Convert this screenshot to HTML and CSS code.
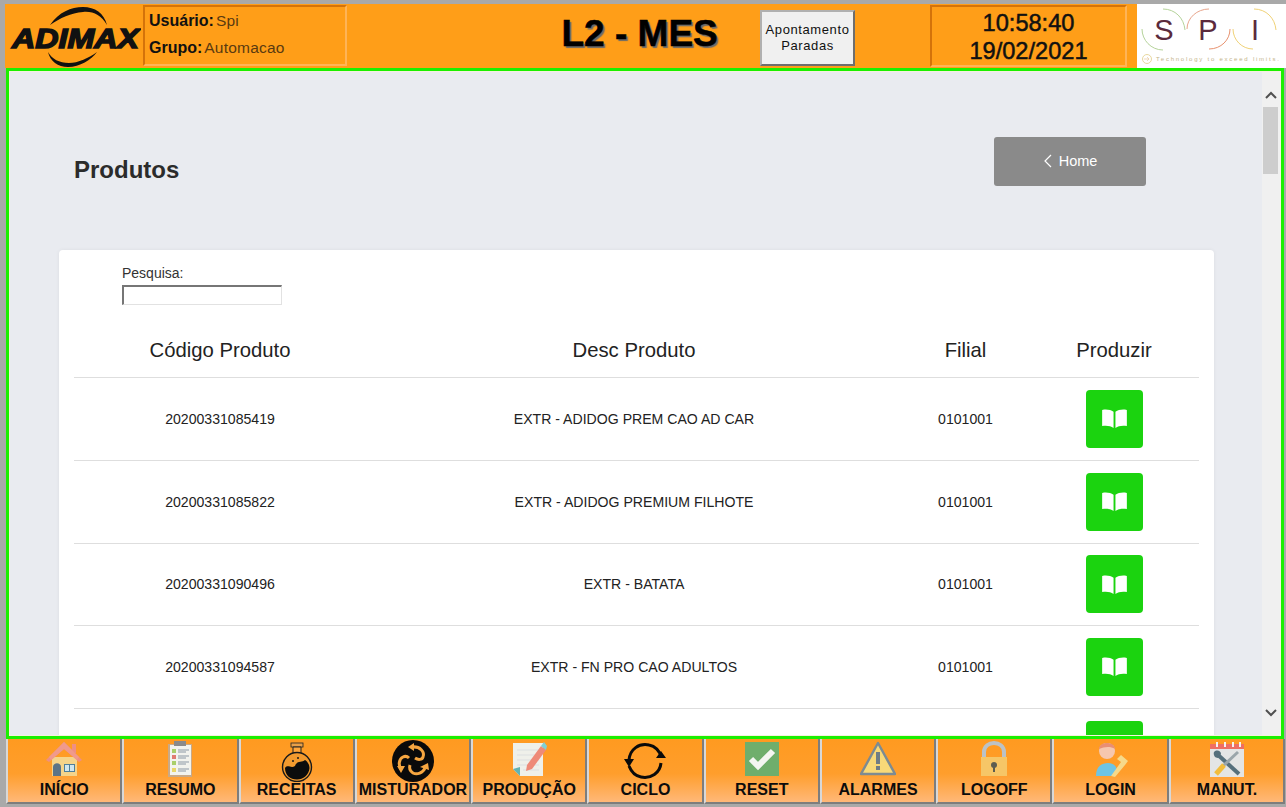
FILE: index.html
```html
<!DOCTYPE html>
<html lang="en">

<head>
  <meta charset="UTF-8">
  <meta name="viewport" content="width=device-width, initial-scale=1.0">
  <title>L2 - MES</title>
  <link rel="stylesheet" href="styles.css">
</head>

<body>
  <header class="topbar">
    <div class="logo">
      <svg width="136" height="66" viewBox="0 0 136 66">
        <path d="M45 21 C54 8 66 3 78 3 C90 3 99 9 102 21 C96 11 88 7 78 8 C66 9 55 14 45 21Z" fill="#111" />
        <path d="M43 48 C45 57 53 63 63 63 C75 63 86 56 92 48 C84 54 73 59 64 59 C54 59 47 55 43 48Z" fill="#111" />
        <text class="logo-text" x="7" y="44" textLength="127" lengthAdjust="spacingAndGlyphs">ADIMAX</text>
      </svg>
    </div>
    <div class="user-box">
      <div class="user-line"><b>Usuário:</b><span>Spi</span></div>
      <div class="user-line"><b>Grupo:</b><span>Automacao</span></div>
    </div>
    <h1 class="app-title">L2 - MES</h1>
    <button class="stop-btn">Apontamento<br>Paradas</button>
    <div class="clock">
      <div>10:58:40</div>
      <div>19/02/2021</div>
    </div>
    <div class="spi-logo">
      <svg width="149" height="64" viewBox="0 0 149 64">
        <g fill="none" stroke-width="1">
          <path d="M5 25 C5 36 14 46 26 46" stroke="#b5d39a" />
          <path d="M26 5 C38 5 47 14 48 26" stroke="#b5d39a" />
          <path d="M50 25 C50 14 60 5 72 5" stroke="#e8a58c" />
          <path d="M72 45 C84 45 93 36 93 25" stroke="#e8926f" />
          <path d="M96 25 C96 36 105 45 116 45" stroke="#f0d277" />
          <path d="M117 5 C129 5 138 14 139 26" stroke="#f0d277" />
        </g>
        <g class="spi-letters">
          <text x="27" y="36" text-anchor="middle">S</text>
          <text x="71" y="36" text-anchor="middle">P</text>
          <text x="118" y="36" text-anchor="middle">I</text>
        </g>
        <circle cx="10" cy="55" r="4.5" fill="none" stroke="#e8d8a0" />
        <path d="M7 55 H12 M10 53 L12 55 L10 57" fill="none" stroke="#e8c9a0" stroke-width=".7" />
        <text class="spi-tag" x="19" y="57">Technology to exceed limits.</text>
      </svg>
    </div>
  </header>

  <main class="frame">
    <div class="content">
      <div class="page-head">
        <h2>Produtos</h2>
        <a class="home-btn" href="#">
          <svg width="9" height="14" viewBox="0 0 9 14">
            <path d="M8 1 L2 7 L8 13" fill="none" stroke="#fff" stroke-width="1.2" />
          </svg>
          Home
        </a>
      </div>

      <section class="card">
        <div class="search">
          <label for="q">Pesquisa:</label>
          <input id="q" type="text">
        </div>

        <table>
          <thead>
            <tr>
              <th class="col-code">Código Produto</th>
              <th class="col-desc">Desc Produto</th>
              <th class="col-branch">Filial</th>
              <th class="col-action">Produzir</th>
            </tr>
          </thead>
          <tbody>
            <tr>
              <td>20200331085419</td>
              <td>EXTR - ADIDOG PREM CAO AD CAR</td>
              <td>0101001</td>
              <td><button class="go-btn"><svg class="book" viewBox="0 0 26 20"><path d="M0 1 C5 0 9 1 12 3 V20 C9 18 5 17 0 18Z M26 1 C21 0 17 1 14 3 V20 C17 18 21 17 26 18Z" fill="#fff" /></svg></button></td>
            </tr>
            <tr>
              <td>20200331085822</td>
              <td>EXTR - ADIDOG PREMIUM FILHOTE</td>
              <td>0101001</td>
              <td><button class="go-btn"><svg class="book" viewBox="0 0 26 20"><path d="M0 1 C5 0 9 1 12 3 V20 C9 18 5 17 0 18Z M26 1 C21 0 17 1 14 3 V20 C17 18 21 17 26 18Z" fill="#fff" /></svg></button></td>
            </tr>
            <tr>
              <td>20200331090496</td>
              <td>EXTR - BATATA</td>
              <td>0101001</td>
              <td><button class="go-btn"><svg class="book" viewBox="0 0 26 20"><path d="M0 1 C5 0 9 1 12 3 V20 C9 18 5 17 0 18Z M26 1 C21 0 17 1 14 3 V20 C17 18 21 17 26 18Z" fill="#fff" /></svg></button></td>
            </tr>
            <tr>
              <td>20200331094587</td>
              <td>EXTR - FN PRO CAO ADULTOS</td>
              <td>0101001</td>
              <td><button class="go-btn"><svg class="book" viewBox="0 0 26 20"><path d="M0 1 C5 0 9 1 12 3 V20 C9 18 5 17 0 18Z M26 1 C21 0 17 1 14 3 V20 C17 18 21 17 26 18Z" fill="#fff" /></svg></button></td>
            </tr>
            <tr>
              <td></td>
              <td></td>
              <td></td>
              <td><button class="go-btn"><svg class="book" viewBox="0 0 26 20"><path d="M0 1 C5 0 9 1 12 3 V20 C9 18 5 17 0 18Z M26 1 C21 0 17 1 14 3 V20 C17 18 21 17 26 18Z" fill="#fff" /></svg></button></td>
            </tr>
          </tbody>
        </table>
      </section>
    </div>

    <div class="scrollbar">
      <svg width="12" height="8" viewBox="0 0 12 8"><path d="M1 7 L6 2 L11 7" fill="none" stroke="#505050" stroke-width="2" /></svg>
      <div class="thumb"></div>
      <svg class="scroll-down" width="12" height="8" viewBox="0 0 12 8"><path d="M1 1 L6 6 L11 1" fill="none" stroke="#505050" stroke-width="2" /></svg>
    </div>
  </main>

  <nav class="bottombar">
    <a class="nav-btn" href="#">
      <svg viewBox="0 0 36 36">
        <rect x="6" y="16" width="25" height="19" fill="#f5d48a" />
        <rect x="26" y="3" width="4" height="9" fill="#ee8f84" />
        <path d="M0 19 L18 1 L36 19 L33 21 L18 8 L3 21Z" fill="#ee8f84" />
        <path d="M18 1 L33 16 L31 19 L18 8 L5 19 L3 16Z" fill="#f09a8c" />
        <path d="M7 35 V26 C7 21 15 21 15 26 V35Z" fill="#5c7486" />
        <rect x="18" y="23" width="11" height="8" fill="#4f7f9b" />
        <rect x="19" y="24" width="4" height="6" fill="#cfe6ee" />
        <rect x="24" y="24" width="4" height="6" fill="#cfe6ee" />
      </svg>
      <span>INÍCIO</span>
    </a>
    <a class="nav-btn" href="#">
      <svg viewBox="0 0 36 36">
        <rect x="6" y="3" width="24" height="33" fill="#c9a987" />
        <rect x="8" y="4" width="21" height="30" fill="#f2f3ee" />
        <rect x="12" y="0" width="12" height="5" fill="#8a8a8a" />
        <rect x="10" y="8" width="4" height="4" fill="#a9cf6b" />
        <rect x="10" y="14" width="4" height="4" fill="#e07a72" />
        <rect x="10" y="20" width="4" height="4" fill="#a9cf6b" />
        <rect x="10" y="27" width="4" height="4" fill="#e9d66b" />
        <path d="M16 9 H27 M16 11 H24 M16 15 H27 M16 17 H24 M16 21 H27 M16 23 H24 M16 28 H27 M16 30 H24" stroke="#8b99a6" stroke-width="1.1" />
      </svg>
      <span>RESUMO</span>
    </a>
    <a class="nav-btn" href="#">
      <svg class="big-icon" viewBox="0 0 42 42">
        <rect x="15" y="3" width="12" height="4" fill="#e8a04a" stroke="#222" stroke-width=".8" />
        <path d="M17 7 H25 V14 H17Z" fill="#ffa63c" stroke="#222" stroke-width="1" />
        <circle cx="21" cy="27" r="14.5" fill="#f29a2e" stroke="#1a1a1a" stroke-width="1.4" />
        <path d="M9 28 C12 24 15 29 19 26 C21 20 26 23 29 20 C32 22 33.5 25 33.5 28 C33 35 27 39.5 21 39.5 C14 39.5 9 35 9 28Z" fill="#0c0c0c" />
        <circle cx="17" cy="21" r="1" fill="#1a1a1a" />
        <circle cx="22" cy="18" r="1" fill="#1a1a1a" />
      </svg>
      <span>RECEITAS</span>
    </a>
    <a class="nav-btn" href="#">
      <svg class="big-icon" viewBox="0 0 42 42">
        <circle cx="21" cy="21" r="21" fill="#0a0a0a" />
        <g fill="none" stroke="#f6a640" stroke-width="3">
          <path d="M20 7 C28 6 33 12 31 17 C30 20 26 20 23 18" />
          <path d="M33 28 C31 33 25 35 21 33 C18 31 17 28 18 25" />
          <path d="M9 29 C6 25 7 19 11 17 C13 16 15 16 17 18" />
        </g>
        <path d="M22 3 V11 L16 7Z M28 27 L37 30 L36 23Z M5 26 H13 L9 33Z" fill="#f6a640" />
      </svg>
      <span>MISTURADOR</span>
    </a>
    <a class="nav-btn" href="#">
      <svg viewBox="0 0 36 36">
        <path d="M2 2 H32 V35 H9 L2 28Z" fill="#eff0ea" />
        <path d="M6 9 H28 M6 14 H28 M6 19 H28 M6 24 H28 M12 29 H28" stroke="#dcdfe0" stroke-width="1" />
        <path d="M2 28 L9 26 V35Z" fill="#62b3b3" />
        <path d="M16 24 L30 5 L35 9 L21 28 L15 30Z" fill="#ee8a78" />
        <path d="M30 5 L33 1 L36 5 L35 9Z" fill="#7fcfd6" />
      </svg>
      <span>PRODUÇÃO</span>
    </a>
    <a class="nav-btn" href="#">
      <svg class="big-icon" viewBox="0 0 42 42">
        <g fill="none" stroke="#0a0a0a" stroke-width="3">
          <path d="M5 20 C6 9 15 3 25 5 C31 6 36 11 37 17" />
          <path d="M37 23 C36 33 27 39 17 37 C11 36 7 31 5 26" />
        </g>
        <path d="M0 19 H10 L5 27Z M32 18 H42 L37 11Z" fill="#0a0a0a" />
      </svg>
      <span>CICLO</span>
    </a>
    <a class="nav-btn" href="#">
      <svg viewBox="0 0 36 36">
        <rect x="1" y="1" width="34" height="34" fill="#6fae6c" />
        <path d="M7 18 L14 25 L29 10" fill="none" stroke="#f4f6f2" stroke-width="6" />
      </svg>
      <span>RESET</span>
    </a>
    <a class="nav-btn" href="#">
      <svg viewBox="0 0 36 36">
        <path d="M18 2 L35 33 H1Z" fill="#f8d978" stroke="#7d8b92" stroke-width="2.4" stroke-linejoin="round" />
        <rect x="16" y="11" width="4" height="12" fill="#6f7d85" />
        <rect x="16" y="25" width="4" height="4" fill="#6f7d85" />
      </svg>
      <span>ALARMES</span>
    </a>
    <a class="nav-btn" href="#">
      <svg viewBox="0 0 36 36">
        <path d="M8 17 V11 C8 -1 28 -1 28 11 V17" fill="none" stroke="#bcc2c6" stroke-width="4" />
        <rect x="5" y="16" width="26" height="19" fill="#f6c667" />
        <circle cx="18" cy="24" r="3" fill="#5d5d50" />
        <rect x="17" y="25" width="2" height="6" fill="#5d5d50" />
      </svg>
      <span>LOGOFF</span>
    </a>
    <a class="nav-btn" href="#">
      <svg viewBox="0 0 36 36">
        <path d="M3 35 C3 25 9 22 15 22 C21 22 24 26 24 30 L20 35Z" fill="#6fc4e4" />
        <circle cx="14" cy="10" r="8" fill="#f6c7ae" />
        <path d="M6 8 C6 0 22 0 22 8 C17 5 11 6 6 8Z" fill="#e98f74" />
        <path d="M18 35 L28 21 L24 18 L28 14 L35 20 L32 24 L22 36Z" fill="#f6d98a" />
      </svg>
      <span>LOGIN</span>
    </a>
    <a class="nav-btn" href="#">
      <svg viewBox="0 0 36 36">
        <rect x="1" y="4" width="34" height="32" fill="#e3e5e5" />
        <rect x="1" y="3" width="34" height="5" fill="#ef6f62" />
        <path d="M8 1 V6 M16 1 V6 M24 1 V6 M31 1 V6" stroke="#f2f2f2" stroke-width="2" />
        <path d="M8 13 L30 33" stroke="#55707c" stroke-width="4" />
        <path d="M5 11 C8 8 12 10 12 13 L9 17 C6 17 4 14 5 11Z" fill="#55707c" />
        <path d="M29 11 L14 25" stroke="#9aa6ab" stroke-width="3" />
        <path d="M15 24 L7 33" stroke="#f2bd3c" stroke-width="5" />
      </svg>
      <span>MANUT.</span>
    </a>
  </nav>
</body>

</html>
```

FILE: styles.css
```css
* {
  margin: 0;
  padding: 0;
  box-sizing: border-box;
  font-family: "Liberation Sans", Arial, sans-serif;

  --orange: #ff9e18;
  --green-line: #1bef00;
}

body {
  background-color: #a9a9a9;
  width: 1286px;
  height: 807px;
  overflow: hidden;
  padding-top: 4px;
}

/* top bar */
.topbar {
  background-color: var(--orange);
  height: 64px;
  margin-left: 5px;
  display: flex;
  align-items: flex-start;
}

.logo {
  width: 138px;
  height: 64px;
  flex-shrink: 0;
}

.logo-text {
  font-size: 28px;
  font-weight: bold;
  font-style: italic;
  fill: #111;
  stroke: #111;
  stroke-width: 1.5px;
}

.user-box {
  width: 204px;
  height: 61px;
  margin-top: 1px;
  padding: 4px 4px;
  border: 2px solid;
  border-color: #d4730a #ffb456 #ffb456 #d4730a;
  display: flex;
  flex-direction: column;
  gap: 8px;
  font-size: 16px;
}

.user-line {
  display: flex;
  gap: 2px;
  line-height: 19px;
  color: #5a3a10;
}

.user-line b {
  color: #111;
  font-weight: bold;
}

.user-line span {
  font-size: 15.5px;
  letter-spacing: .2px;
}

.app-title {
  margin-left: 215px;
  margin-top: 9px;
  width: 199px;
  font-size: 37px;
  line-height: 42px;
  font-weight: bold;
  color: #000;
  -webkit-text-stroke: .6px #000;
  text-shadow: 2px 2px 1px #6a6a6a;
  white-space: nowrap;
}

.stop-btn {
  width: 95px;
  height: 56px;
  margin-top: 6px;
  flex-shrink: 0;
  background-color: #f0f0f0;
  border: 2px solid;
  border-color: #b0b0b0 #6e6e6e #6e6e6e #b0b0b0;
  font-size: 13px;
  line-height: 16px;
  letter-spacing: .6px;
  color: #111;
}

.clock {
  width: 197px;
  height: 62px;
  margin-left: 75px;
  margin-top: 1px;
  flex-shrink: 0;
  border: 2px solid;
  border-color: #d4730a #ffb456 #ffb456 #d4730a;
  text-align: center;
  font-size: 23.6px;
  line-height: 28px;
  padding-top: 2px;
  color: #111;
  -webkit-text-stroke: .5px #111;
}

.spi-logo {
  width: 149px;
  height: 64px;
  margin-left: 10px;
  flex-shrink: 0;
  background-color: #fff;
}

.spi-letters text {
  font-family: "Liberation Sans", sans-serif;
  font-size: 29px;
  fill: #5b2a3c;
}

.spi-tag {
  font-size: 6px;
  letter-spacing: 1.77px;
  fill: #c4b48a;
}

/* green frame */
.frame {
  height: 671px;
  margin-left: 6px;
  margin-right: 2px;
  padding: 1px;
  border: 3px solid var(--green-line);
  background-color: #f5f1de;
  display: flex;
  overflow: hidden;
}

.content {
  width: 1252px;
  height: 663px;
  padding: 65px 48px 0 49px;
  background-color: #e9ebf0;
  overflow: hidden;
  flex-shrink: 0;
}

.page-head {
  display: flex;
  justify-content: space-between;
  align-items: center;
  margin: 0 68px 64px 15px;
}

.page-head h2 {
  font-size: 24px;
  color: #2b2b2b;
  padding-top: 16px;
}

.home-btn {
  width: 152px;
  height: 49px;
  background-color: #8a8a8a;
  border-radius: 3px;
  color: #fff;
  font-size: 14.5px;
  text-decoration: none;
  display: flex;
  align-items: center;
  justify-content: center;
  gap: 7px;
  padding-bottom: 1px;
}

.card {
  background-color: #fff;
  border-radius: 4px;
  padding: 15px 15px 0;
  box-shadow: 0 0 4px rgba(0, 0, 0, .06);
}

.search {
  margin-left: 48px;
  width: 160px;
  display: flex;
  flex-direction: column;
}

.search label {
  font-size: 14px;
  line-height: 17px;
  color: #333;
  margin-bottom: 3px;
}

.search input {
  height: 20px;
  width: 160px;
  border: 1px solid #e2e2e2;
  border-top: 2px solid #767676;
  border-left: 2px solid #767676;
  outline: none;
}

table {
  width: 1125px;
  margin-top: 20px;
  border-collapse: collapse;
  table-layout: fixed;
}

th {
  height: 52px;
  font-size: 20.3px;
  font-weight: normal;
  color: #222;
  border-bottom: 1px solid #dedede;
}

td {
  height: 83px;
  font-size: 14.1px;
  color: #222;
  text-align: center;
  border-bottom: 1px solid #dedede;
}

tbody tr:nth-child(3) td {
  height: 82px;
}

.col-code { width: 292px; }
.col-desc { width: 536px; }
.col-branch { width: 127px; }
.col-action { width: 170px; }

.go-btn {
  width: 57px;
  height: 58px;
  background-color: #1bd30f;
  border: none;
  border-radius: 4px;
  display: inline-grid;
  place-content: center;
  vertical-align: middle;
}

.book {
  width: 25px;
  height: 19px;
  display: block;
}

/* fake scrollbar of the panel */
.scrollbar {
  width: 18px;
  padding: 19px 2px 0 1px;
  background-color: #f0f0f0;
  display: flex;
  flex-direction: column;
  align-items: center;
}

.thumb {
  width: 100%;
  height: 67px;
  margin-top: 8px;
  background-color: #cdcdcd;
}

.scroll-down {
  margin-top: auto;
  margin-bottom: 18px;
}

/* bottom buttons */
.bottombar {
  height: 65px;
  margin-left: 6px;
  margin-right: 1px;
  display: grid;
  grid-template-columns: repeat(11, 1fr);
}

.nav-btn {
  background: linear-gradient(to bottom, #ff9a20 0%, #ff9e2c 55%, #ffb878 100%);
  border-left: 2px solid #d8d8d8;
  border-right: 2px solid #7d7d7d;
  border-bottom: 2px solid #7d7d7d;
  display: flex;
  flex-direction: column;
  align-items: center;
  text-decoration: none;
  color: #0c0c0c;
  overflow: hidden;
}

.nav-btn svg {
  width: 36px;
  height: 36px;
  margin-top: 2px;
  flex-shrink: 0;
}

.nav-btn svg.big-icon {
  width: 42px;
  height: 42px;
  margin-top: 1px;
  margin-bottom: -5px;
}

.nav-btn span {
  font-size: 16px;
  font-weight: bold;
  line-height: 18px;
  margin-top: 4px;
  white-space: nowrap;
}
```
